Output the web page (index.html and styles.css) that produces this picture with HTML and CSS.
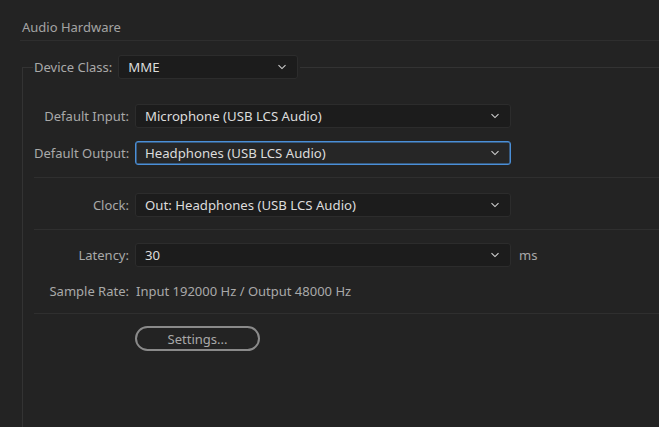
FILE: index.html
```html
<!DOCTYPE html>
<html lang="en">
<head>
<meta charset="utf-8">
<title>Audio Hardware</title>
<link rel="stylesheet" href="styles.css">
</head>
<body>
<div class="title">Audio Hardware</div>
<fieldset class="group">
  <legend class="legend">
    <span class="label-inline">Device Class:</span>
    <div class="select select-class"><span class="value">MME</span><svg class="chev" width="10" height="6" viewBox="0 0 10 6"><path d="M1.5 1.2 L5 4.6 L8.5 1.2" fill="none" stroke="#cfcfcf" stroke-width="1.1"/></svg></div>
  </legend>
  <div class="content">
    <div class="form">
      <label class="label">Default Input:</label>
      <div class="select"><span class="value">Microphone (USB LCS Audio)</span><svg class="chev" width="10" height="6" viewBox="0 0 10 6"><path d="M1.5 1.2 L5 4.6 L8.5 1.2" fill="none" stroke="#cfcfcf" stroke-width="1.1"/></svg></div>
      <label class="label">Default Output:</label>
      <div class="select focused"><span class="value">Headphones (USB LCS Audio)</span><svg class="chev" width="10" height="6" viewBox="0 0 10 6"><path d="M1.5 1.2 L5 4.6 L8.5 1.2" fill="none" stroke="#cfcfcf" stroke-width="1.1"/></svg></div>
    </div>
    <div class="sep"></div>
    <div class="form sec-clock">
      <label class="label">Clock:</label>
      <div class="select"><span class="value">Out: Headphones (USB LCS Audio)</span><svg class="chev" width="10" height="6" viewBox="0 0 10 6"><path d="M1.5 1.2 L5 4.6 L8.5 1.2" fill="none" stroke="#cfcfcf" stroke-width="1.1"/></svg></div>
    </div>
    <div class="sep"></div>
    <div class="form sec-latency">
      <label class="label">Latency:</label>
      <div class="with-unit">
        <div class="select"><span class="value">30</span><svg class="chev" width="10" height="6" viewBox="0 0 10 6"><path d="M1.5 1.2 L5 4.6 L8.5 1.2" fill="none" stroke="#cfcfcf" stroke-width="1.1"/></svg></div>
        <span class="unit">ms</span>
      </div>
      <span class="label">Sample Rate:</span>
      <span class="info">Input 192000 Hz / Output 48000 Hz</span>
    </div>
    <div class="sep sep-last"></div>
    <div class="form sec-settings">
      <span></span>
      <button class="btn">Settings...</button>
    </div>
  </div>
</fieldset>
</body>
</html>
```

FILE: styles.css
```css
html, body {
  margin: 0;
  padding: 0;
  background: #232323;
  height: 100%;
  overflow: hidden;
}
body {
  font-family: "Noto Sans", "Open Sans", sans-serif;
  font-size: 13px;
  color: #a9a9a9;
}
.title {
  margin-left: 20px;
  padding: 18px 0 4px 2px;
  line-height: 18px;
  color: #a3a3a3;
  border-bottom: 1px solid #2e2e2e;
}
.group {
  box-sizing: border-box;
  margin: 14px 0 0 22px;
  padding: 0 0 0 11px;
  border: 0;
  border-left: 1px solid #333333;
  border-top: 1px solid #333333;
  min-width: 0;
  height: 372px;
}
.legend {
  display: flex;
  align-items: center;
  gap: 6px;
  padding: 0 2px 0 1px;
  margin-left: -1px;
}
.label-inline {
  color: #a9a9a9;
  line-height: 18px;
}
.select {
  box-sizing: border-box;
  height: 24px;
  width: 376px;
  display: flex;
  align-items: center;
  justify-content: space-between;
  padding: 0 10px 0 9px;
  background: #1c1c1c;
  border: 1px solid #2c2c2c;
  border-radius: 3px;
  color: #dcdcdc;
}
.select-class {
  width: 180px;
}
.select.focused {
  background: #262626;
  border: 1px solid #4a8fd8;
  box-shadow: inset 0 0 0 0.5px #4a8fd8;
}
.value {
  line-height: 18px;
  white-space: nowrap;
  font-size: 13.2px;
}
.chev {
  flex: none;
}
.content {
  padding-top: 25px;
}
.form {
  display: grid;
  grid-template-columns: 95px auto;
  column-gap: 6px;
  row-gap: 13px;
  align-items: center;
  justify-content: start;
}
.label {
  text-align: right;
  line-height: 18px;
  color: #a9a9a9;
  white-space: nowrap;
}
.sep {
  height: 1px;
  background: #2f2f2f;
  margin-top: 12px;
}
.sep-last {
  margin-top: 13px;
}
.sec-clock {
  margin-top: 15px;
}
.sec-latency {
  margin-top: 13px;
  row-gap: 15px;
}
.with-unit {
  display: flex;
  align-items: center;
  gap: 8px;
}
.unit {
  color: #a9a9a9;
  line-height: 18px;
}
.info {
  color: #a9a9a9;
  line-height: 18px;
  padding-left: 1px;
}
.sec-settings {
  margin-top: 12px;
}
.btn {
  box-sizing: border-box;
  width: 125px;
  height: 25px;
  border: 2px solid #8a8a8a;
  border-radius: 13px;
  background: transparent;
  color: #a9a9a9;
  font-family: inherit;
  font-size: 13px;
  padding: 0;
}
```
